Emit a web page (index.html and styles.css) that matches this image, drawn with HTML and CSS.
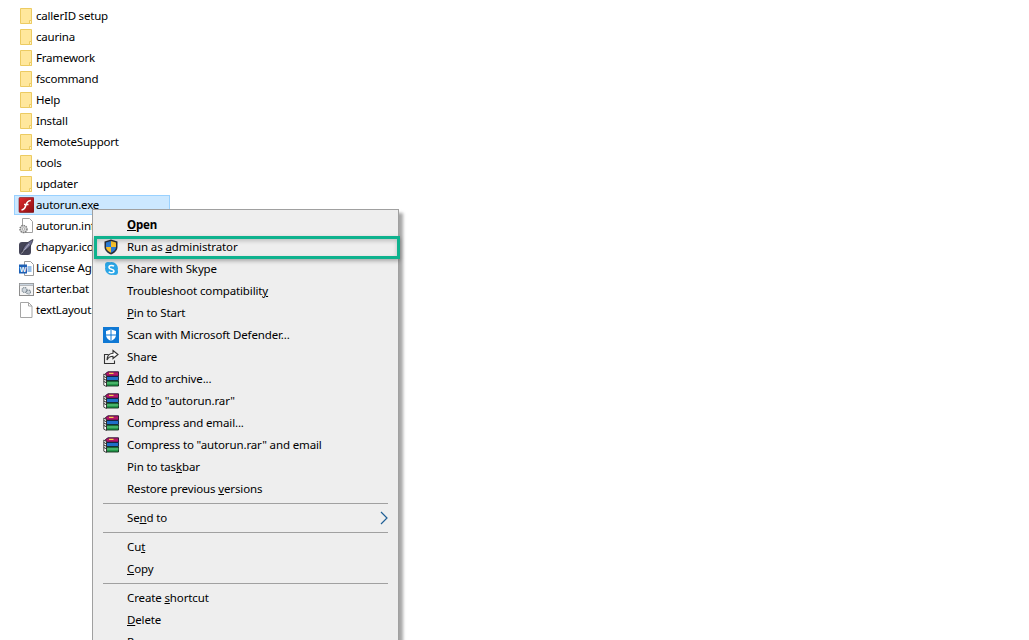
FILE: index.html
```html
<!DOCTYPE html>
<html lang="en">
<head>
<meta charset="utf-8">
<title>Explorer context menu</title>
<link rel="stylesheet" href="styles.css">
</head>
<body>
<svg class="defs" width="0" height="0" aria-hidden="true">
  <defs>
    <linearGradient id="flashbg" x1="0" y1="0" x2="1" y2="1"><stop offset="0" stop-color="#e02a2e"/><stop offset="1" stop-color="#8a0f14"/></linearGradient>
    <symbol id="folder" viewBox="0 0 16 18">
      <path d="M2.500 1.500h11v15h-11z" fill="#ffe79c" stroke="#eccb62"/>
      <path d="M11.500 16.500v-3h2v3z" fill="#fff3c4" stroke="#eccb62"/>
    </symbol>
    <symbol id="rar" viewBox="0 0 16 16">
      <path d="M2.500 2.500 5 .8h10.500v4.400H3.500z" fill="#b5166a" stroke="#26102c" stroke-width=".9"/>
      <path d="M6 1.800h4.500v1.200H6z" fill="#f0cf4e"/>
      <path d="M3.500 5.500h12v4h-12z" fill="#1f6fc9" stroke="#10203a" stroke-width=".9"/>
      <path d="M3.500 10h12v5h-12z" fill="#23994a" stroke="#10301c" stroke-width=".9"/>
      <path d="M3.500 12h12" stroke="#7fdc9a" stroke-width=".8"/>
      <path d="M.8 3v11.200l2.700 1.300V4.500z" fill="#fff" stroke="#1c1c1c" stroke-width=".8"/>
      <path d="M.8 5.500l2.700 1.300M.8 8l2.700 1.300M.8 10.500l2.700 1.300" stroke="#1c1c1c" stroke-width=".9" fill="none"/>
    </symbol>
  </defs>
</svg>

<ul class="files">
  <li class="file"><svg class="ficon"><use href="#folder"/></svg><span>callerID setup</span></li>
  <li class="file"><svg class="ficon"><use href="#folder"/></svg><span>caurina</span></li>
  <li class="file"><svg class="ficon"><use href="#folder"/></svg><span>Framework</span></li>
  <li class="file"><svg class="ficon"><use href="#folder"/></svg><span>fscommand</span></li>
  <li class="file"><svg class="ficon"><use href="#folder"/></svg><span>Help</span></li>
  <li class="file"><svg class="ficon"><use href="#folder"/></svg><span>Install</span></li>
  <li class="file"><svg class="ficon"><use href="#folder"/></svg><span>RemoteSupport</span></li>
  <li class="file"><svg class="ficon"><use href="#folder"/></svg><span>tools</span></li>
  <li class="file"><svg class="ficon"><use href="#folder"/></svg><span>updater</span></li>
  <li class="file selected">
    <svg class="ficon" viewBox="0 0 16 18"><rect x="1" y="1.500" width="15" height="15" rx="1" fill="url(#flashbg)" stroke="#7a1216" stroke-width=".6"/><path d="M3.500 14c3-.3 3.800-2.600 4.500-5 .7-2.500 1.600-4.100 4.800-4.400M6 8.500h4.500" fill="none" stroke="#fff" stroke-width="1.500"/></svg><span>autorun.exe</span>
  </li>
  <li class="file"><svg class="ficon" viewBox="0 0 16 18"><path d="M4.500 1.500h7l3 3v11h-10z" fill="#fff" stroke="#a0a0a0"/><circle cx="5.500" cy="12" r="3.500" fill="#d9d9d9" stroke="#7d7d7d" stroke-dasharray="1.500 .8" stroke-width="1.500"/><circle cx="5.500" cy="12" r="1.200" fill="#fff" stroke="#888" stroke-width=".6"/></svg><span>autorun.inf</span></li>
  <li class="file"><svg class="ficon" viewBox="0 0 16 18"><rect x="1" y="4" width="12" height="13" rx="3" fill="#454558"/><path d="M4 14C5 9 9 4 15 1.500c-1 5.500-5 10.500-9.500 11.500z" fill="#6d6d90" stroke="#25252f" stroke-width=".7"/><path d="M3.500 15.500 11 6" stroke="#ddd" stroke-width=".6"/></svg><span>chapyar.ico</span></li>
  <li class="file"><svg class="ficon" viewBox="0 0 16 18"><path d="M6.500 2.500h6l3 3v11h-9z" fill="#fff" stroke="#9a9a9a"/><path d="M9.500 8h4M9.500 10h4M9.500 12h4" stroke="#2b7cd3" stroke-width="1"/><rect x="1" y="5.500" width="8" height="9" fill="#1d5fb4"/><text class="wordmark" x="5" y="12.800" text-anchor="middle">W</text></svg><span>License Agreement.txt</span></li>
  <li class="file"><svg class="ficon" viewBox="0 0 16 18"><rect x="1.500" y="3.500" width="14" height="12" fill="#f4f4f4" stroke="#8d8d8d"/><rect x="1.500" y="3.500" width="14" height="2" fill="#c9d4df" stroke="#8d8d8d" stroke-width=".5"/><circle cx="6.500" cy="10" r="2.500" fill="#cfd6dc" stroke="#7b8791" stroke-width="1.100" stroke-dasharray="1.300 .7"/><circle cx="10.500" cy="12" r="2" fill="#cfd6dc" stroke="#7b8791" stroke-width="1.100" stroke-dasharray="1.200 .6"/></svg><span>starter.bat</span></li>
  <li class="file"><svg class="ficon" viewBox="0 0 16 18"><path d="M2.500 1.500h8l3.500 3.500v11.500H2.500z" fill="#fff" stroke="#a6a6a6"/><path d="M10.500 1.500V5H14" fill="none" stroke="#a6a6a6"/></svg><span>textLayout.swf</span></li>
</ul>

<div class="menu">
  <div class="highlight"></div>
  <div class="item strong"><u>O</u>pen</div>
  <div class="item"><svg class="micon" viewBox="0 0 16 16"><path d="M8 .5 14.500 2.500V8c0 3.500-3 6-6.500 7.500C4.500 14 1.500 11.500 1.500 8V2.500z" fill="#2a2f3a"/><path d="M8 2 13 3.500V8H8z" fill="#f6bf2b"/><path d="M8 2 3 3.500V8h5z" fill="#2a7bd6"/><path d="M3 8h5v5.800C5.500 12.600 3 10.800 3 8z" fill="#f6bf2b"/><path d="M8 8h5c0 2.800-2.500 4.600-5 5.800z" fill="#2a7bd6"/></svg>Run as <u>a</u>dministrator</div>
  <div class="item"><svg class="micon" viewBox="0 0 16 16"><circle cx="8.500" cy="7.500" r="6.500" fill="#2aa5e6"/><circle cx="5" cy="4" r="3" fill="#2aa5e6"/><circle cx="12" cy="11" r="3" fill="#2aa5e6"/><path d="M11 5.300C10 4.400 6 4 6 6.400c0 2.200 5 1.300 5 3.500 0 2.300-4.200 2-5.300.9" fill="none" stroke="#fff" stroke-width="1.500"/></svg>Share with Skype</div>
  <div class="item">Troubleshoot compatibilit<u>y</u></div>
  <div class="item"><u>P</u>in to Start</div>
  <div class="item"><svg class="micon" viewBox="0 0 16 16"><rect width="16" height="16" fill="#0f78d4"/><path d="M8 2.500 13 4v4c0 3-2.500 4.800-5 6-2.500-1.200-5-3-5-6V4z" fill="#fff"/><path d="M8 2.500v11.500M3 8h10" stroke="#0f78d4" stroke-width="1"/></svg>Scan with Microsoft Defender...</div>
  <div class="item"><svg class="micon" viewBox="0 0 16 16"><path d="M5.500 5.500H1.500v9h10v-3" fill="none" stroke="#333" stroke-width="1.100"/><path d="M10 1.500 15 5.500 10 9.500V7.300C7 7.300 5 8.800 4 11c0-4 2.500-6.500 6-6.800z" fill="#fff" stroke="#333" stroke-width="1.100"/></svg>Share</div>
  <div class="item"><svg class="micon"><use href="#rar"/></svg><u>A</u>dd to archive...</div>
  <div class="item"><svg class="micon"><use href="#rar"/></svg>Add <u>t</u>o "autorun.rar"</div>
  <div class="item"><svg class="micon"><use href="#rar"/></svg>Compress and email...</div>
  <div class="item"><svg class="micon"><use href="#rar"/></svg>Compress to "autorun.rar" and email</div>
  <div class="item">Pin to tas<u>k</u>bar</div>
  <div class="item">Restore previous <u>v</u>ersions</div>
  <div class="sep"></div>
  <div class="item has-sub">Se<u>n</u>d to<svg class="chevron" viewBox="0 0 8 14"><path d="M1 1l6 6-6 6" fill="none" stroke="#1f5f95" stroke-width="1.200"/></svg></div>
  <div class="sep"></div>
  <div class="item">Cu<u>t</u></div>
  <div class="item"><u>C</u>opy</div>
  <div class="sep"></div>
  <div class="item">Create <u>s</u>hortcut</div>
  <div class="item"><u>D</u>elete</div>
  <div class="item">Rena<u>m</u>e</div>
</div>
</body>
</html>
```
FILE: styles.css
```css
html, body {
  margin: 0;
  height: 640px;
  overflow: hidden;
  background: #fff;
  font-family: "Noto Sans", "Open Sans", sans-serif;
  font-size: 11.5px;
  letter-spacing: -0.2px;
  color: #000;
}
.defs { position: absolute; }
.files {
  list-style: none;
  margin: 0;
  padding: 6px 0 0 14px;
  width: 156px;
}
.file {
  box-sizing: border-box;
  height: 20px;
  margin-bottom: 1px;
  display: flex;
  align-items: center;
  white-space: nowrap;
  border: 1px solid transparent;
  padding-left: 3px;
}
.file span {
  position: relative;
  top: -1px;
}
.selected {
  background: #cce8ff;
  border-color: #99d1ff;
}
.ficon {
  width: 16px;
  height: 18px;
  margin-right: 2px;
  flex: none;
}
.wordmark {
  font-family: "Liberation Sans", sans-serif;
  font-size: 7px;
  font-weight: 700;
  fill: #fff;
}
.menu {
  position: absolute;
  left: 92px;
  top: 209px;
  width: 305px;
  height: 480px;
  padding-top: 4px;
  background: #eeeeee;
  border: 1px solid #a0a0a0;
  box-shadow: 4px 4px 3px rgba(0, 0, 0, 0.35);
  letter-spacing: -0.13px;
}
.item {
  position: relative;
  height: 22px;
  line-height: 21px;
  padding-left: 34px;
  white-space: nowrap;
}
.strong { font-weight: 700; }
.micon {
  position: absolute;
  left: 10px;
  top: 3px;
  width: 16px;
  height: 16px;
}
.chevron {
  position: absolute;
  right: 10px;
  top: 4px;
  width: 8px;
  height: 14px;
}
.sep {
  height: 1px;
  margin: 3px 10px;
  background: #a0a0a0;
}
.highlight {
  position: absolute;
  left: 1px;
  top: 26px;
  width: 300px;
  height: 17px;
  border: 3px solid #0fb28e;
  box-shadow: 0 2px 4px rgba(0, 0, 0, 0.3), inset 0 2px 4px rgba(0, 0, 0, 0.2);
  z-index: 1;
}
```
